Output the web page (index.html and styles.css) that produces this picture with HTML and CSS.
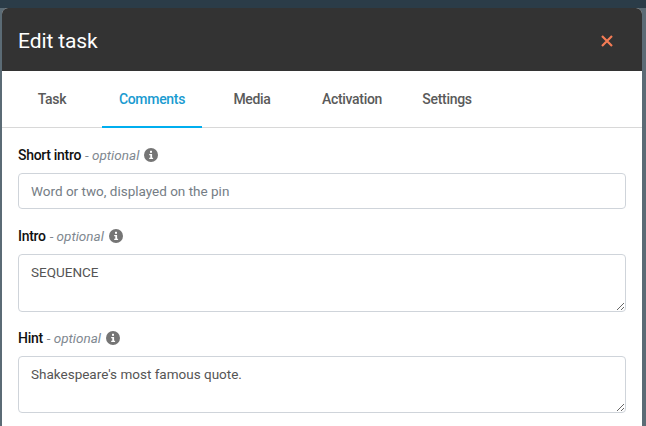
FILE: index.html
```html
<!DOCTYPE html>
<html lang="en">
<head>
<meta charset="utf-8">
<title>Edit task</title>
<link rel="stylesheet" href="styles.css">
</head>
<body>
<div class="backdrop">
  <div class="modal">
    <header class="modal-head">
      <h1 class="modal-title">Edit task</h1>
      <svg class="close" viewBox="0 0 12 12" width="12" height="12"><path d="M1 1 11 11M11 1 1 11" /></svg>
    </header>
    <nav class="tabs">
      <a class="tab t1">Task</a>
      <a class="tab t2 active">Comments</a>
      <a class="tab t3">Media</a>
      <a class="tab t4">Activation</a>
      <a class="tab t5">Settings</a>
    </nav>
    <form class="form">
      <div class="label-row l1"><b>Short intro</b> <i>- optional</i>
        <svg class="info" viewBox="0 0 14 14" width="14" height="14"><circle cx="7" cy="7" r="7"/><rect x="6" y="2.8" width="2" height="2"/><path d="M5.2 6h2.9v3.8h1v1.2H5.2V9.800h1.100V7.200H5.200z"/></svg>
      </div>
      <input class="field input" placeholder="Word or two, displayed on the pin">
      <div class="label-row l2"><b>Intro</b> <i>- optional</i>
        <svg class="info" viewBox="0 0 14 14" width="14" height="14"><circle cx="7" cy="7" r="7"/><rect x="6" y="2.8" width="2" height="2"/><path d="M5.2 6h2.9v3.8h1v1.2H5.2V9.800h1.100V7.200H5.200z"/></svg>
      </div>
      <textarea class="field area a1">SEQUENCE</textarea>
      <div class="label-row l3"><b>Hint</b> <i>- optional</i>
        <svg class="info" viewBox="0 0 14 14" width="14" height="14"><circle cx="7" cy="7" r="7"/><rect x="6" y="2.8" width="2" height="2"/><path d="M5.2 6h2.9v3.8h1v1.2H5.2V9.800h1.100V7.200H5.200z"/></svg>
      </div>
      <textarea class="field area a2">Shakespeare's most famous quote.</textarea>
    </form>
  </div>
</div>
</body>
</html>
```
FILE: styles.css
```css
* { box-sizing: border-box; }
html, body { margin: 0; height: 100%; overflow: hidden; }
body { font-family: "Roboto", "Liberation Sans", sans-serif; background: #5b6b75; }
.backdrop {
  width: 646px; height: 426px; overflow: hidden;
  padding: 8px 4px 0 2px;
  background: linear-gradient(#2b3c48 0, #2b3c48 8px, #5b6b75 8px);
}
.modal { background: #fff; height: 418px; border-radius: 6px 6px 0 0; overflow: hidden; }
.modal-head {
  height: 63px; background: #333; display: flex; align-items: center;
  justify-content: space-between; padding: 3px 29px 0 16px;
}
.modal-title { margin: 0; font-size: 21px; font-weight: 400; color: #fff; letter-spacing: -0.1px; }
.close { fill: none; stroke: #f47c55; stroke-width: 2.2; }
.tabs { height: 57px; display: flex; border-bottom: 1px solid #d8d8d8; }
.tab {
  height: 57px; display: flex; align-items: center; justify-content: center;
  font-size: 14px; font-weight: 500; color: #5a5a5a; letter-spacing: -0.3px; padding-bottom: 2px;
}
.t1 { width: 100px; }
.t2 { width: 100px; }
.t3 { width: 100px; }
.t4 { width: 100px; }
.t5 { width: 100px; margin-left: -5px; }
.tab.active { color: #1a9bd0; border-bottom: 2px solid #00aeef; padding-bottom: 0; }
.form { padding: 0 16px; }
.label-row {
  display: flex; align-items: center; gap: 4px; height: 20px;
  font-size: 14px; color: #777;
}
.label-row b { font-weight: 500; color: #111; letter-spacing: -0.3px; }
.label-row i { font-style: italic; color: #808890; font-size: 13.500px; }
.l1 { margin-top: 17px; }
.l2 { margin-top: 17px; }
.l3 { margin-top: 16px; }
.info { fill: #757575; margin-left: 1px; }
.info rect, .info path { fill: #fff; }
.field {
  display: block; width: 100%; border: 1px solid #cfd4da; border-radius: 4px;
  font-family: "Roboto", "Liberation Sans", sans-serif; font-size: 13.500px; color: #555;
  padding: 0 12px; background: #fff; outline: none; margin-top: 8px;
}
.field::placeholder { color: #757d85; opacity: 1; }
.input { height: 36px; }
.area { padding-top: 9px; resize: vertical; }
.a1 { height: 58px; }
.a2 { height: 57px; }
```
